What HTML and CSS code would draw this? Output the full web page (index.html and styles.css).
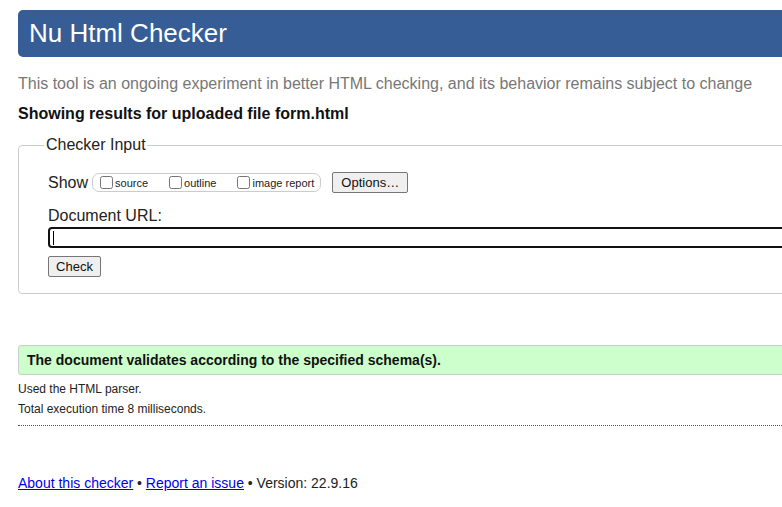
FILE: index.html
```html
<!DOCTYPE html>
<html lang="en">
<head>
<meta charset="utf-8">
<title>Showing results for uploaded file form.html - Nu Html Checker</title>
<link rel="stylesheet" href="styles.css">
</head>
<body>
<div class="page">
  <h1 class="title">Nu Html Checker</h1>
  <p class="intro">This tool is an ongoing experiment in better HTML checking, and its behavior remains subject to change</p>
  <p class="showing">Showing results for uploaded file form.html</p>
  <form class="checker">
    <fieldset class="input-set">
      <legend class="legend">Checker Input</legend>
      <div class="show-row">
        <span class="show-label">Show</span>
        <span class="show-group">
          <label class="opt"><input type="checkbox" class="cb">source</label>
          <label class="opt"><input type="checkbox" class="cb">outline</label>
          <label class="opt last"><input type="checkbox" class="cb">image report</label>
        </span>
        <button type="button" class="btn options">Options…</button>
      </div>
      <div class="doc-label">Document URL:</div>
      <div class="url-field"><span class="caret"></span></div>
      <button type="button" class="btn check">Check</button>
    </fieldset>
  </form>
  <p class="success">The document validates according to the specified schema(s).</p>
  <p class="details">Used the HTML parser.</p>
  <p class="details">Total execution time 8 milliseconds.</p>
  <hr class="sep">
  <p class="footer"><a href="#" class="link">About this checker</a> • <a href="#" class="link">Report an issue</a> • Version: 22.9.16</p>
</div>
</body>
</html>
```
FILE: styles.css
```css
html, body {
  margin: 0;
  padding: 0;
  overflow: hidden;
  background: #fff;
}
body {
  font-family: "Liberation Sans", Arial, sans-serif;
  color: #222;
}
.page {
  width: 1100px;
  padding: 10px 0 0 18px;
}
.title {
  margin: 0;
  height: 47px;
  line-height: 47px;
  padding-left: 11px;
  background: #365d95;
  color: #fff;
  font-size: 26px;
  font-weight: normal;
  border-radius: 5px 0 0 5px;
}
.intro {
  margin: 17px 0 0;
  font-size: 16px;
  line-height: 20px;
  color: #777;
}
.showing {
  margin: 10px 0 0;
  font-size: 16px;
  line-height: 20px;
  font-weight: bold;
  color: #111;
}
.checker {
  margin: 11px 0 0;
}
.input-set {
  margin: 0;
  padding: 0 0 16px 29px;
  border: 1px solid #ccc;
  border-radius: 4px;
  min-width: 0;
}
.legend {
  margin-left: -4px;
  padding: 0 1px 0 2px;
  font-size: 16px;
  line-height: 20px;
  color: #222;
}
.show-row {
  display: flex;
  align-items: center;
  height: 21px;
  margin-top: 17px;
}
.show-label {
  font-size: 16px;
  line-height: 20px;
}
.show-group {
  display: flex;
  align-items: center;
  height: 17px;
  margin-left: 4px;
  padding: 0 6px 0 3px;
  border: 1px solid #ccc;
  border-radius: 7px;
}
.opt {
  display: flex;
  align-items: flex-end;
  font-size: 11px;
  line-height: 12px;
  margin-right: 17px;
}
.opt.last {
  margin-right: 0;
}
.cb {
  width: 13px;
  height: 13px;
  margin: 0 2px 0 4px;
}
.btn {
  font-family: "Liberation Sans", Arial, sans-serif;
  font-size: 13px;
  color: #111;
  background: #efefef;
  border: 1px solid #767676;
  border-radius: 2px;
  height: 21px;
  padding: 0 8px;
}
.options {
  margin-left: 11px;
  width: 76px;
}
.doc-label {
  margin-top: 13px;
  font-size: 16px;
  line-height: 20px;
}
.url-field {
  margin-top: 1px;
  height: 17px;
  width: 1000px;
  border: 2px solid #111;
  border-radius: 4px;
  display: flex;
  align-items: center;
  padding-left: 3px;
}
.caret {
  width: 1px;
  height: 14px;
  background: #000;
}
.check {
  display: block;
  margin-top: 8px;
  width: 53px;
  padding: 0 6px;
}
.success {
  margin: 51px 0 0;
  padding: 6px 8px;
  font-size: 14px;
  line-height: 16px;
  font-weight: bold;
  color: #111;
  background: #ccffcc;
  border: 1px solid #ccc;
  border-radius: 3px 0 0 3px;
}
.details {
  margin: 0;
  font-size: 12px;
  line-height: 20px;
  color: #222;
}
.success + .details {
  margin-top: 4px;
}
.sep {
  margin: 6px 0 0;
  border: 0;
  border-top: 1px dotted #555;
  height: 0;
}
.footer {
  margin: 47px 0 0;
  font-size: 14px;
  line-height: 20px;
  color: #222;
}
.link {
  color: #00e;
  text-decoration: underline;
}
```
